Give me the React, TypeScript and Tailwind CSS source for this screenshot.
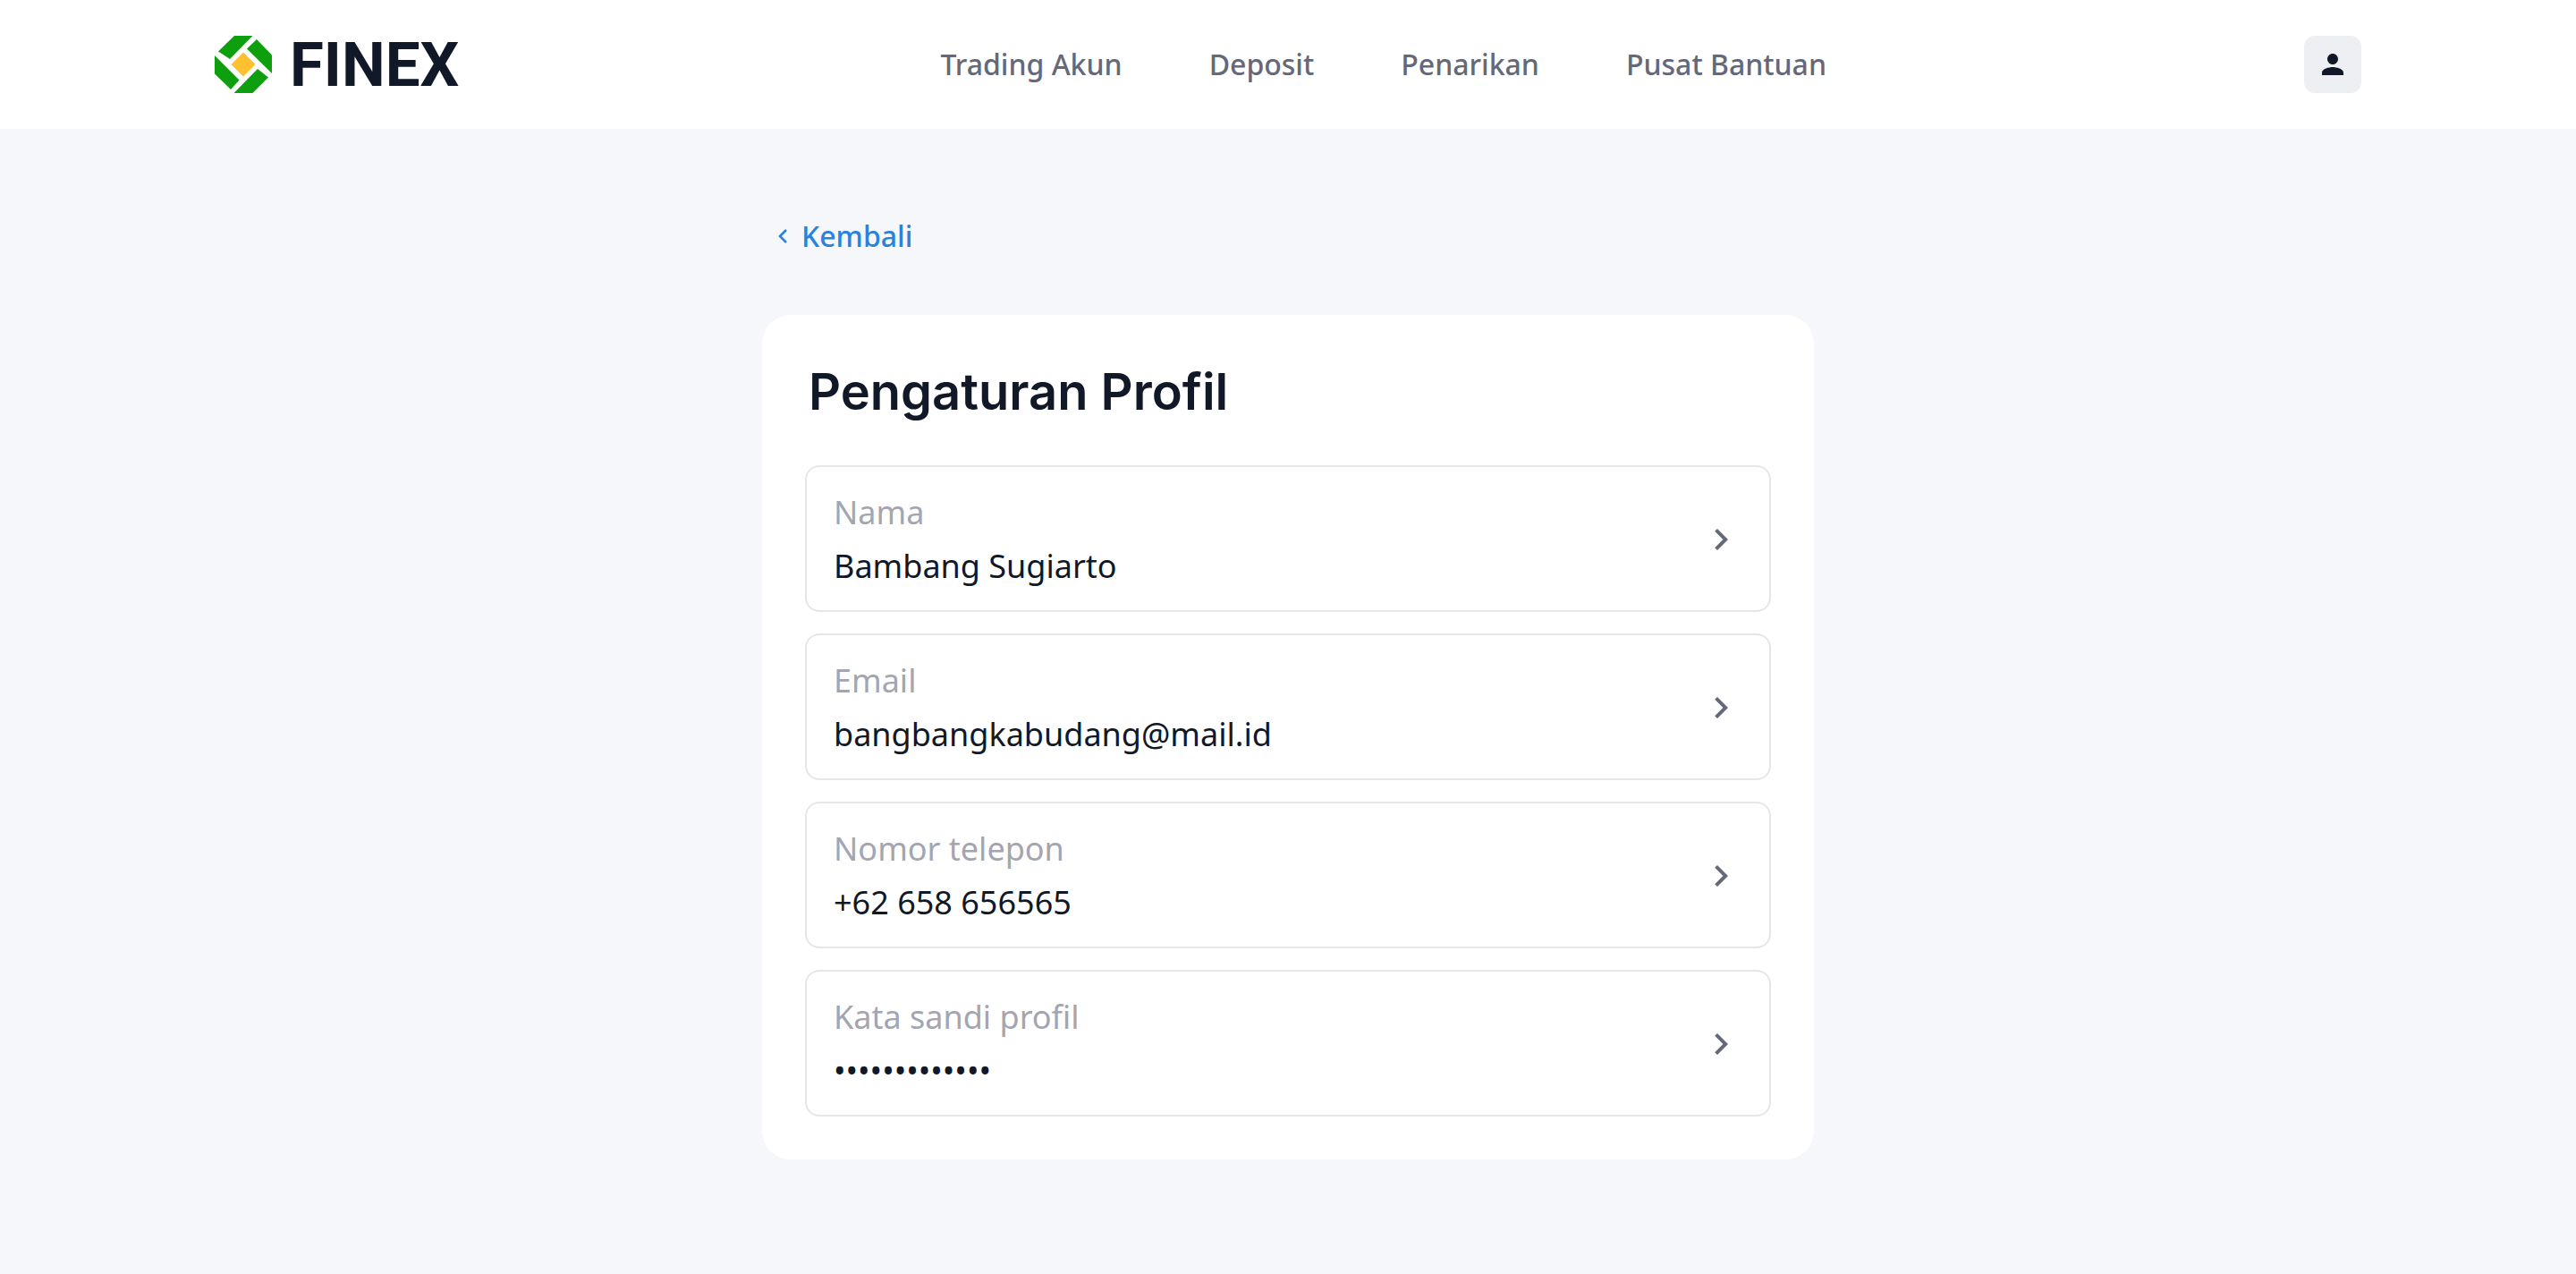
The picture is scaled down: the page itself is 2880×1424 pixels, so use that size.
import { MdPerson, MdChevronRight } from "react-icons/md";

const navItems = ["Trading Akun", "Deposit", "Penarikan", "Pusat Bantuan"];

const profileRows = [
  { label: "Nama", value: "Bambang Sugiarto" },
  { label: "Email", value: "bangbangkabudang@mail.id" },
  { label: "Nomor telepon", value: "+62 658 656565" },
  { label: "Kata sandi profil", value: "•••••••••••••" },
];

function LogoMark() {
  return (
    <svg viewBox="0 0 64 64" className="size-16" aria-hidden="true">
      <g fill="#0d9f0d">
        <path d="M22 0H42.500L17 26L4 17.500Z" />
        <path d="M47 4L64 21.500V42L36 14.500Z" />
        <path d="M0 22L27.500 49.500L18 60L0 42.500Z" />
        <path d="M48 37L60 46.500L42.500 64H21.500Z" />
      </g>
      <path d="M32 18.500L45.500 32L32 45.500L18.500 32Z" fill="#fdc12f" />
    </svg>
  );
}

function Header() {
  return (
    <header className="bg-white px-60">
      <div className="flex h-36 items-center justify-between">
        <a href="#" className="flex items-center gap-5">
          <LogoMark />
          <span className="pr-1 font-['Roboto',sans-serif] text-[69px] leading-none font-bold text-[#111827]">
            FINEX
          </span>
        </a>
        <nav className="flex gap-[97px]">
          {navItems.map((item) => (
            <a key={item} href="#" className="text-[32px] leading-12 font-medium text-[#656879]">
              {item}
            </a>
          ))}
        </nav>
        <button
          type="button"
          aria-label="Profil"
          className="flex size-16 items-center justify-center rounded-xl bg-[#edeff2] text-[#111827]"
        >
          <MdPerson className="size-9" />
        </button>
      </div>
    </header>
  );
}

function ProfileRow({ label, value }: { label: string; value: string }) {
  return (
    <button
      type="button"
      className="flex w-full items-center justify-between rounded-2xl border-2 border-[#e5e7e9] px-[30px] pt-[21px] pb-[19px] text-left text-[36px] leading-[60px]"
    >
      <span className="flex flex-col">
        <span className="text-[#a3a5b1]">{label}</span>
        <span className="text-[#111827]">{value}</span>
      </span>
      <MdChevronRight className="size-12 text-[#656879]" />
    </button>
  );
}

export default function App() {
  return (
    <div className="min-h-screen bg-[#f5f7fa] font-['Noto_Sans',sans-serif]">
      <Header />
      <main className="mx-auto max-w-[1176px] pt-24 pb-32">
        <a href="#" className="ml-[18px] inline-flex items-center gap-4 text-[32px] leading-12 font-medium text-[#2b82dc]">
          <svg viewBox="0 0 10 16" className="h-4 w-2.5" fill="none" stroke="currentColor" strokeWidth="2.6" aria-hidden="true">
            <path d="M9 1L2 8L9 15" />
          </svg>
          Kembali
        </a>
        <section className="mt-16 rounded-[32px] bg-white p-12">
          <h1 className="px-1 text-[56px] leading-[76px] font-semibold text-[#111827] font-['Inter',sans-serif]">
            Pengaturan Profil
          </h1>
          <div className="mt-11 flex flex-col gap-6">
            {profileRows.map((row) => (
              <ProfileRow key={row.label} label={row.label} value={row.value} />
            ))}
          </div>
        </section>
      </main>
    </div>
  );
}
